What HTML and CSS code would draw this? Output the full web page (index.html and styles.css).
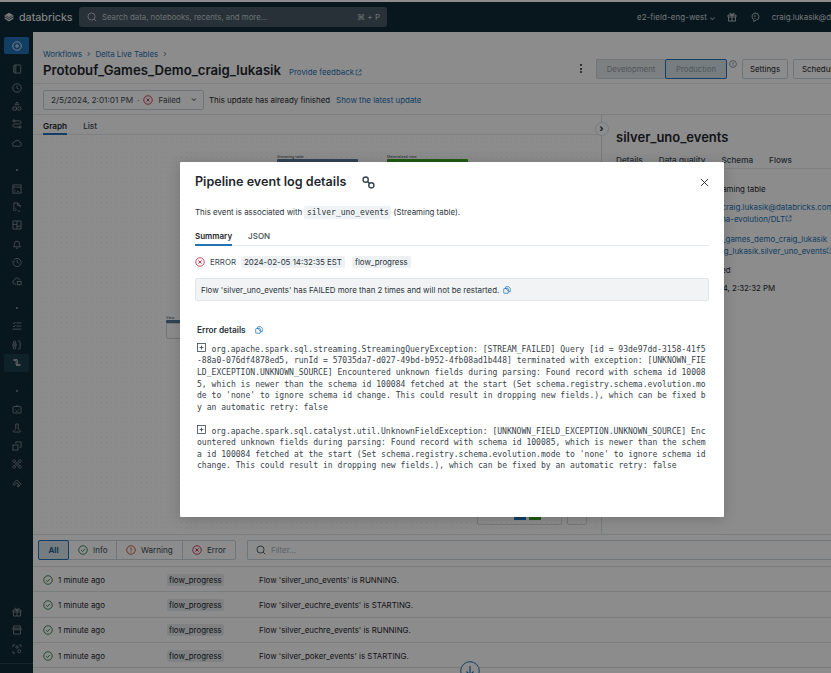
FILE: index.html
```html
<!DOCTYPE html>
<html lang="en">
<head>
<meta charset="utf-8">
<title>Pipeline event log details</title>
<link rel="stylesheet" href="styles.css">
</head>
<body>
<svg class="defs" width="0" height="0" aria-hidden="true">
  <symbol id="i-ok" viewBox="0 0 16 16"><circle cx="8" cy="8" r="6.8" fill="none" stroke="currentColor" stroke-width="1.4"/><path d="M5 8.2l2.2 2.2L11 6.2" fill="none" stroke="currentColor" stroke-width="1.4"/></symbol>
  <symbol id="i-err" viewBox="0 0 16 16"><circle cx="8" cy="8" r="6.8" fill="none" stroke="currentColor" stroke-width="1.4"/><path d="M5.5 5.5l5 5M10.5 5.5l-5 5" fill="none" stroke="currentColor" stroke-width="1.5"/></symbol>
  <symbol id="i-warn" viewBox="0 0 16 16"><circle cx="8" cy="8" r="6.8" fill="none" stroke="currentColor" stroke-width="1.4"/><path d="M8 4.2v4.8M8 10.4v1.5" fill="none" stroke="currentColor" stroke-width="1.5"/></symbol>
  <symbol id="i-search" viewBox="0 0 16 16"><circle cx="7.2" cy="7.2" r="5.7" fill="none" stroke="currentColor" stroke-width="1.4"/><path d="M11.4 11.4l3.4 3.4" stroke="currentColor" stroke-width="1.4"/></symbol>
  <symbol id="i-ext" viewBox="0 0 16 16"><path d="M7 2.5H2.5v11h11V9M9.5 2h4.5v4.500M14 2L8 8" fill="none" stroke="currentColor" stroke-width="1.5"/></symbol>
  <symbol id="i-copy" viewBox="0 0 16 16"><rect x="1.500" y="5" width="9" height="9.500" rx="1" fill="none" stroke="currentColor" stroke-width="1.500"/><path d="M5.500 5V1.500h6l3 3v7h-4M5.500 5l5 5" fill="none" stroke="currentColor" stroke-width="1.500"/></symbol>
  <symbol id="i-link" viewBox="0 0 16 16"><circle cx="4.500" cy="4.500" r="3.200" fill="none" stroke="currentColor" stroke-width="1.700"/><circle cx="11.500" cy="11.500" r="3.200" fill="none" stroke="currentColor" stroke-width="1.700"/><path d="M6.500 6.500l3 3" stroke="currentColor" stroke-width="1.700"/></symbol>
  <symbol id="i-plusbox" viewBox="0 0 16 16"><rect x="1" y="1" width="14" height="14" fill="none" stroke="currentColor" stroke-width="1.400"/><path d="M8 4.500v7M4.500 8h7" stroke="currentColor" stroke-width="1.500"/></symbol>
  <symbol id="i-plus" viewBox="0 0 16 16"><circle cx="8" cy="8" r="6.800" fill="none" stroke="currentColor" stroke-width="1.300"/><path d="M8 4.800v6.400M4.800 8h6.400" stroke="currentColor" stroke-width="1.300"/></symbol>
  <symbol id="i-book" viewBox="0 0 16 16"><rect x="3" y="1.500" width="11" height="13" rx="1" fill="none" stroke="currentColor" stroke-width="1.300"/><path d="M6 1.500v13M1.500 4.500H4M1.500 8H4M1.500 11.500H4" stroke="currentColor" stroke-width="1.300"/></symbol>
  <symbol id="i-clock" viewBox="0 0 16 16"><circle cx="8" cy="8" r="6.800" fill="none" stroke="currentColor" stroke-width="1.300"/><path d="M8 4v4.300l3 1.500" fill="none" stroke="currentColor" stroke-width="1.300"/></symbol>
  <symbol id="i-shapes" viewBox="0 0 16 16"><path d="M8 1.500l3 4.500H5zM1.500 9.500h5.500v5H1.500z" fill="none" stroke="currentColor" stroke-width="1.300"/><circle cx="11.700" cy="12" r="2.700" fill="none" stroke="currentColor" stroke-width="1.300"/></symbol>
  <symbol id="i-flow" viewBox="0 0 16 16"><path d="M3 3h9a2.500 2.500 0 0 1 0 5H4a2.500 2.500 0 0 0 0 5h9" fill="none" stroke="currentColor" stroke-width="1.300"/><circle cx="3" cy="3" r="1.700" fill="none" stroke="currentColor" stroke-width="1.300"/><circle cx="13" cy="13" r="1.700" fill="none" stroke="currentColor" stroke-width="1.300"/></symbol>
  <symbol id="i-cloud" viewBox="0 0 16 16"><path d="M4 13.200a3.200 3.200 0 0 1-.4-6.400A4.600 4.600 0 0 1 12.400 6.700 3.300 3.300 0 0 1 12 13.200z" fill="none" stroke="currentColor" stroke-width="1.300"/></symbol>
  <symbol id="i-term" viewBox="0 0 16 16"><rect x="1.500" y="1.500" width="13" height="13" fill="none" stroke="currentColor" stroke-width="1.300"/><path d="M1.500 5h13M4 9l1.500 1.500L4 12M8 12h3" fill="none" stroke="currentColor" stroke-width="1.200"/></symbol>
  <symbol id="i-file" viewBox="0 0 16 16"><path d="M3 14.500v-13h6l4 4v3M9 1.500v4h4M5 10l2 2-2 2.500M9 14.500h4" fill="none" stroke="currentColor" stroke-width="1.300"/></symbol>
  <symbol id="i-dash" viewBox="0 0 16 16"><path d="M1.500 1.500h13v13h-13zM8 1.500v13M1.500 7h6.500M8 10h6.500" fill="none" stroke="currentColor" stroke-width="1.300"/></symbol>
  <symbol id="i-bell" viewBox="0 0 16 16"><path d="M2.500 12.500c1.200-1 1.500-2.500 1.500-5a4 4 0 0 1 8 0c0 2.500.3 4 1.500 5zM6.500 14.700h3" fill="none" stroke="currentColor" stroke-width="1.300"/></symbol>
  <symbol id="i-hist" viewBox="0 0 16 16"><path d="M2.700 5A6.500 6.500 0 1 1 1.500 8.500M.8 6.500l1.700 1.700 1.700-1.700M8.300 4.500V8.500l2.500 1.500" fill="none" stroke="currentColor" stroke-width="1.300"/></symbol>
  <symbol id="i-cloudbox" viewBox="0 0 16 16"><path d="M6 13H4.200a3.200 3.200 0 0 1-.5-6.300A4.500 4.500 0 0 1 12.300 6" fill="none" stroke="currentColor" stroke-width="1.300"/><rect x="8.500" y="8.500" width="6" height="5.500" fill="none" stroke="currentColor" stroke-width="1.300"/></symbol>
  <symbol id="i-list" viewBox="0 0 16 16"><path d="M7 3h8M7 8h8M1 13h14M1.500 3l1.500 1.500L5.500 1.500M1.500 8l1.500 1.500L5.500 6.500" fill="none" stroke="currentColor" stroke-width="1.300"/></symbol>
  <symbol id="i-diff" viewBox="0 0 16 16"><circle cx="4" cy="3.500" r="2" fill="none" stroke="currentColor" stroke-width="1.300"/><circle cx="4" cy="12.500" r="2" fill="none" stroke="currentColor" stroke-width="1.300"/><rect x="1.500" y="6.500" width="5" height="3" fill="none" stroke="currentColor" stroke-width="1.300"/><path d="M9.500 1.500h2l1.500 1v11l-1.500 1h-2" fill="none" stroke="currentColor" stroke-width="1.300"/></symbol>
  <symbol id="i-pipe" viewBox="0 0 16 16"><path d="M2.500 3h3.700c1 0 1.300.6 1.300 1.500v5c0 1 .5 1.500 1.300 1.500h4.700" fill="none" stroke="currentColor" stroke-width="3"/><path d="M2.500 3h3.700c1 0 1.300.6 1.300 1.500v5c0 1 .5 1.500 1.300 1.500h4.700" fill="none" stroke="#1d3d4c" stroke-width="1.200"/></symbol>
  <symbol id="i-bot" viewBox="0 0 16 16"><rect x="1.500" y="4" width="13" height="10.500" rx="1.500" fill="none" stroke="currentColor" stroke-width="1.300"/><path d="M8 4V1.500M5 8v1M11 8v1M6 11.500h4" fill="none" stroke="currentColor" stroke-width="1.300"/></symbol>
  <symbol id="i-flask" viewBox="0 0 16 16"><path d="M6 1.500h4v7.500M6 1.500v7.500c-.5 2-2.500 2.500-3.500 3.500-.7.800-.3 2 1 2h9c1.300 0 1.700-1.200 1-2-1-1-3-1.500-3.500-3.500" fill="none" stroke="currentColor" stroke-width="1.300"/></symbol>
  <symbol id="i-boxes" viewBox="0 0 16 16"><rect x="1.500" y="6.500" width="8" height="8" fill="none" stroke="currentColor" stroke-width="1.300"/><path d="M6 4V1.500h8.500V10H12" fill="none" stroke="currentColor" stroke-width="1.300"/></symbol>
  <symbol id="i-graph" viewBox="0 0 16 16"><circle cx="3.500" cy="3.500" r="2.200" fill="none" stroke="currentColor" stroke-width="1.200"/><circle cx="12.500" cy="3.500" r="2.200" fill="none" stroke="currentColor" stroke-width="1.200"/><circle cx="8" cy="8" r="2.200" fill="none" stroke="currentColor" stroke-width="1.200"/><circle cx="3.500" cy="12.500" r="2.200" fill="none" stroke="currentColor" stroke-width="1.200"/><circle cx="12.500" cy="12.500" r="2.200" fill="none" stroke="currentColor" stroke-width="1.200"/></symbol>
  <symbol id="i-serve" viewBox="0 0 16 16"><path d="M1.500 10l6-7 7 7-2 2-5-4.500-4 4.500z" fill="none" stroke="currentColor" stroke-width="1.300"/><circle cx="10" cy="12.500" r="1.500" fill="none" stroke="currentColor" stroke-width="1.300"/></symbol>
  <symbol id="i-gift" viewBox="0 0 16 16"><path d="M1.500 5h13v3h-13zM2.500 8v6.500h11V8M8 5v9.500M8 5C6 5 4.500 4 4.500 2.800S6.500 1 8 5c1.500-4 3.500-3.400 3.500-2.200S10 5 8 5z" fill="none" stroke="currentColor" stroke-width="1.300"/></symbol>
  <symbol id="i-store" viewBox="0 0 16 16"><path d="M3 1.500h10l1.500 4.500v1.500h-13V6zM2.500 7.500v7h11v-7M1.500 5h13" fill="none" stroke="currentColor" stroke-width="1.300"/></symbol>
  <symbol id="i-scan" viewBox="0 0 16 16"><path d="M1.500 5V1.500H5M11 1.500h3.500V5M1.500 11v3.500H5" fill="none" stroke="currentColor" stroke-width="1.300"/><circle cx="8" cy="5" r="1.800" fill="none" stroke="currentColor" stroke-width="1.300"/><circle cx="11.500" cy="11.500" r="2.500" fill="none" stroke="currentColor" stroke-width="1.300"/></symbol>
  <symbol id="i-chat" viewBox="0 0 16 16"><path d="M8 1.500a6.500 6 0 0 1 1 11.900L6 15v-2.800A6.500 6 0 0 1 8 1.500z" fill="none" stroke="currentColor" stroke-width="1.300"/><path d="M8 4.500v4M8 9.800v1.300" stroke="currentColor" stroke-width="1.300"/></symbol>
  <symbol id="i-logo" viewBox="0 0 16 16"><path d="M8 1L1 5v2.200l7 4 7-4V5zM1 8.500v2.300l7 4.200 7-4.200V8.500l-7 4z" fill="currentColor"/><path d="M2.500 5.700L8 9l5.500-3.300" fill="none" stroke="#0f2a37" stroke-width=".9"/></symbol>
</svg>

<div class="app">
  <header class="topbar">
    <div class="brand"><svg class="ic-logo"><use href="#i-logo"/></svg><span>databricks</span></div>
    <div class="search">
      <svg class="ic-search"><use href="#i-search"/></svg>
      <span class="search-text">Search data, notebooks, recents, and more...</span>
      <span class="search-key">⌘ + P</span>
    </div>
    <div class="top-right">
      <span class="workspace">e2-field-eng-west ⌄</span>
      <span class="gift"><svg class="ic-top"><use href="#i-gift"/></svg><i class="gift-dot"></i></span>
      <svg class="ic-top"><use href="#i-chat"/></svg>
      <span class="user">craig.lukasik@d</span>
    </div>
  </header>

  <div class="body-row">
    <nav class="sidebar">
      <div class="nav-new"><svg class="ic-nav"><use href="#i-plus"/></svg></div>
      <div class="nav-group first">
        <span class="nav-item"><svg class="ic-nav"><use href="#i-book"/></svg></span>
        <span class="nav-item"><svg class="ic-nav"><use href="#i-clock"/></svg></span>
        <span class="nav-item"><svg class="ic-nav"><use href="#i-shapes"/></svg></span>
        <span class="nav-item"><svg class="ic-nav"><use href="#i-flow"/></svg></span>
        <span class="nav-item"><svg class="ic-nav"><use href="#i-cloud"/></svg></span>
      </div>
      <i class="nav-dot"></i>
      <div class="nav-group">
        <span class="nav-item"><svg class="ic-nav"><use href="#i-term"/></svg></span>
        <span class="nav-item"><svg class="ic-nav"><use href="#i-file"/></svg></span>
        <span class="nav-item"><svg class="ic-nav"><use href="#i-dash"/></svg></span>
        <span class="nav-item"><svg class="ic-nav"><use href="#i-bell"/></svg></span>
        <span class="nav-item"><svg class="ic-nav"><use href="#i-hist"/></svg></span>
        <span class="nav-item"><svg class="ic-nav"><use href="#i-cloudbox"/></svg></span>
      </div>
      <i class="nav-dot"></i>
      <div class="nav-group">
        <span class="nav-item"><svg class="ic-nav"><use href="#i-list"/></svg></span>
        <span class="nav-item"><svg class="ic-nav"><use href="#i-diff"/></svg></span>
        <span class="nav-item active"><svg class="ic-nav"><use href="#i-pipe"/></svg></span>
      </div>
      <i class="nav-dot"></i>
      <div class="nav-group">
        <span class="nav-item"><svg class="ic-nav"><use href="#i-bot"/></svg></span>
        <span class="nav-item"><svg class="ic-nav"><use href="#i-flask"/></svg></span>
        <span class="nav-item"><svg class="ic-nav"><use href="#i-boxes"/></svg></span>
        <span class="nav-item"><svg class="ic-nav"><use href="#i-graph"/></svg></span>
        <span class="nav-item"><svg class="ic-nav"><use href="#i-serve"/></svg></span>
      </div>
      <div class="nav-group bottom">
        <span class="nav-item"><svg class="ic-nav"><use href="#i-gift"/></svg></span>
        <span class="nav-item"><svg class="ic-nav"><use href="#i-store"/></svg></span>
        <span class="nav-item"><svg class="ic-nav"><use href="#i-scan"/></svg></span>
      </div>
    </nav>

    <main class="main">
      <section class="page-head">
        <div class="head-left">
          <div class="crumbs"><a>Workflows</a><span class="sep">›</span><a>Delta Live Tables</a><span class="sep">›</span></div>
          <div class="title-row"><h1>Protobuf_Games_Demo_craig_lukasik</h1><a class="feedback">Provide feedback<svg class="ic-ext"><use href="#i-ext"/></svg></a></div>
        </div>
        <div class="head-right">
          <span class="kebab"><i></i><i></i><i></i></span>
          <div class="mode"><span class="mode-dev">Development</span><span class="mode-prod">Production</span></div>
          <svg class="ic-info"><use href="#i-warn"/></svg>
          <button class="btn">Settings</button>
          <button class="btn btn-sched">Schedul</button>
        </div>
      </section>

      <section class="update-row">
        <div class="update-select">
          <span class="date">2/5/2024, 2:01:01 PM</span><span class="mid">·</span>
          <svg class="ic-status red"><use href="#i-err"/></svg><span>Failed</span><span class="chev">⌄</span>
        </div>
        <span class="update-msg">This update has already finished</span>
        <a class="update-link">Show the latest update</a>
      </section>

      <section class="workspace-row">
        <div class="graph-pane">
          <div class="tabs"><span class="tab on">Graph</span><span class="tab">List</span></div>
          <div class="canvas">
            <div class="node node-a"><small>Streaming table</small><b></b></div>
            <div class="node node-b"><small>Materialized view</small><b></b></div>
            <div class="node node-c"><small>View</small><b></b><span class="node-body"></span></div>
            <div class="zoombar"><span class="zb-main"><i class="zb-blue"></i><i class="zb-green"></i></span><span class="zb-side"></span></div>
          </div>
          <span class="collapse">›</span>
        </div>
        <aside class="detail">
          <h2>silver_uno_events</h2>
          <div class="detail-tabs"><span class="on">Details</span><span>Data quality</span><span>Schema</span><span>Flows</span></div>
          <div class="detail-list">
            <div class="dl-row"><span class="dk">Type</span><div class="dv"><span class="line p17">Streaming table</span></div></div>
            <div class="dl-row gap6"><span class="dk">Source</span><div class="dv"><a class="line p7">Users/craig.lukasik@databricks.com</a><a class="line p11">schema-evolution/DLT<svg class="ic-ext"><use href="#i-ext"/></svg></a></div></div>
            <div class="dl-row gap8"><span class="dk">Target</span><div class="dv"><a class="line">protobuf_games_demo_craig_lukasik</a><a class="line p20">craig_lukasik.silver_uno_events<svg class="ic-ext"><use href="#i-ext"/></svg></a></div></div>
            <div class="dl-row gap7"><span class="dk">Status</span><div class="dv"><span class="line">Completed</span></div></div>
            <div class="dl-row gap6"><span class="dk">Updated</span><div class="dv"><span class="line p3">2/5/2024, 2:32:32 PM</span></div></div>
          </div>
        </aside>
      </section>

      <section class="log">
        <div class="log-bar">
          <div class="seg">
            <span class="seg-item all">All</span>
            <span class="seg-item info"><svg class="ic-status green"><use href="#i-ok"/></svg>Info</span>
            <span class="seg-item warn"><svg class="ic-status orange"><use href="#i-warn"/></svg>Warning</span>
            <span class="seg-item err"><svg class="ic-status red"><use href="#i-err"/></svg>Error</span>
          </div>
          <div class="filter"><svg class="ic-filter"><use href="#i-search"/></svg><span>Filter...</span></div>
        </div>
        <div class="log-row"><span class="when"><svg class="ic-status green"><use href="#i-ok"/></svg>1 minute ago</span><span class="log-tag-col"><span class="tag">flow_progress</span></span><span>Flow 'silver_uno_events' is RUNNING.</span></div>
        <div class="log-row"><span class="when"><svg class="ic-status green"><use href="#i-ok"/></svg>1 minute ago</span><span class="log-tag-col"><span class="tag">flow_progress</span></span><span>Flow 'silver_euchre_events' is STARTING.</span></div>
        <div class="log-row"><span class="when"><svg class="ic-status green"><use href="#i-ok"/></svg>1 minute ago</span><span class="log-tag-col"><span class="tag">flow_progress</span></span><span>Flow 'silver_euchre_events' is RUNNING.</span></div>
        <div class="log-row"><span class="when"><svg class="ic-status green"><use href="#i-ok"/></svg>1 minute ago</span><span class="log-tag-col"><span class="tag">flow_progress</span></span><span>Flow 'silver_poker_events' is STARTING.</span></div>
        <span class="scroll-down"><svg viewBox="0 0 20 20"><circle cx="10" cy="10" r="9.300" fill="#fff" stroke="currentColor" stroke-width="1"/><path d="M10 5v9M6.500 10.500l3.500 3.500 3.500-3.500" fill="none" stroke="currentColor" stroke-width="1.200"/></svg></span>
      </section>
    </main>
  </div>

  <div class="overlay">
    <div class="modal">
      <div class="modal-head">
        <h3>Pipeline event log details</h3>
        <svg class="ic-link"><use href="#i-link"/></svg>
        <svg class="ic-close" viewBox="0 0 10 10"><path d="M1 1l8 8M9 1l-8 8" stroke="currentColor" stroke-width="1"/></svg>
      </div>
      <p class="assoc">This event is associated with <code>silver_uno_events</code> (Streaming table).</p>
      <div class="modal-tabs"><span class="on">Summary</span><span>JSON</span></div>
      <div class="event-meta">
        <svg class="ic-status red"><use href="#i-err"/></svg><span class="lvl">ERROR</span>
        <span class="chip">2024-02-05 14:32:35 EST</span><span class="chip">flow_progress</span>
      </div>
      <div class="banner">Flow 'silver_uno_events' has FAILED more than 2 times and will not be restarted.<svg class="ic-copy"><use href="#i-copy"/></svg></div>
      <div class="err-head"><strong>Error details</strong><svg class="ic-copy"><use href="#i-copy"/></svg></div>
      <p class="trace"><svg class="ic-plusbox"><use href="#i-plusbox"/></svg>org.apache.spark.sql.streaming.StreamingQueryException: [STREAM_FAILED] Query [id = 93de97dd-3158-41f5-88a0-076df4878ed5, runId = 57035da7-d027-49bd-b952-4fb08ad1b448] terminated with exception: [UNKNOWN_FIELD_EXCEPTION.UNKNOWN_SOURCE] Encountered unknown fields during parsing: Found record with schema id 100085, which is newer than the schema id 100084 fetched at the start (Set schema.registry.schema.evolution.mode to 'none' to ignore schema id change. This could result in dropping new fields.), which can be fixed by an automatic retry: false</p>
      <p class="trace"><svg class="ic-plusbox"><use href="#i-plusbox"/></svg>org.apache.spark.sql.catalyst.util.UnknownFieldException: [UNKNOWN_FIELD_EXCEPTION.UNKNOWN_SOURCE] Encountered unknown fields during parsing: Found record with schema id 100085, which is newer than the schema id 100084 fetched at the start (Set schema.registry.schema.evolution.mode to 'none' to ignore schema id change. This could result in dropping new fields.), which can be fixed by an automatic retry: false</p>
    </div>
  </div>
</div>
</body>
</html>
```
FILE: styles.css
```css
* { box-sizing: border-box; }
html, body { margin: 0; height: 100%; overflow: hidden; }
body { font-family: Inter, "Liberation Sans", sans-serif; font-size: 7.900px; color: #1f272d; background: #fff; }
.defs { position: absolute; }
a { color: #2272b4; }
svg { display: block; flex: none; }

.app { position: relative; width: 831px; height: 673px; overflow: hidden; padding-top: 2px; display: flex; flex-direction: column; }

/* top bar */
.topbar { height: 30px; background: #0f2a37; color: #fff; display: flex; align-items: center; flex: none; }
.brand { width: 79px; padding-left: 4px; display: flex; align-items: center; gap: 5px; font-size: 10.800px; color: #fff; flex: none; }
.ic-logo { width: 10px; height: 10px; color: #d9dde0; }
.search { width: 308px; height: 20px; background: #475a65; border-radius: 3px; display: flex; align-items: center; padding: 0 7px 0 8px; gap: 5px; color: #c6cdd2; font-size: 7.800px; }
.ic-search { width: 10px; height: 10px; }
.search-text { flex: 1; }
.search-key { font-size: 8px; }
.top-right { margin-left: auto; display: flex; align-items: center; width: 194px; flex: none; font-size: 7.900px; color: #d5dbdf; white-space: nowrap; overflow: hidden; }
.workspace { width: 91px; letter-spacing: .1px; }
.gift { position: relative; width: 23px; }
.gift-dot { position: absolute; left: 11px; top: -3px; width: 3px; height: 3px; border-radius: 50%; background: #ff3621; }
.ic-top { width: 10px; height: 10px; }
.user { margin-left: 12px; }

.body-row { flex: 1; display: flex; min-height: 0; }

/* sidebar */
.sidebar { width: 33px; flex: none; background: #0f2a37; color: #8a979f; display: flex; flex-direction: column; align-items: center; padding-top: 5px; }
.nav-new { width: 25px; height: 17px; background: #2272b4; color: #fff; border-radius: 2px; display: grid; place-items: center; }
.nav-group { display: flex; flex-direction: column; align-items: center; width: 100%; }
.nav-group.first { margin-top: 6px; }
.nav-group.bottom { margin-top: auto; margin-bottom: 9px; padding-bottom: 5px; border-bottom: 1px solid #2d4a58; }
.nav-item { width: 25px; height: 18.400px; display: grid; place-items: center; border-radius: 2px; }
.nav-item.active { background: #1d3d4c; color: #fff; }
.ic-nav { width: 10px; height: 10px; }
.nav-dot { width: 2px; height: 2px; border-radius: 50%; background: #8a979f; margin: 17.500px 0 8px; flex: none; }

/* main */
.main { flex: 1; min-width: 0; display: flex; flex-direction: column; }
.page-head { height: 52px; padding: 0 0 0 10px; display: flex; justify-content: space-between; border-bottom: 1px solid #e8ecef; flex: none; }
.head-left { padding-top: 15px; }
.crumbs { display: flex; align-items: center; gap: 5px; font-size: 7.800px; height: 12px; margin-top: 1px; }
.sep { color: #5f7281; font-size: 8.500px; }
.title-row { display: flex; align-items: baseline; gap: 8px; white-space: nowrap; }
h1 { margin: 0; font-size: 13.150px; font-weight: 600; line-height: 20px; }
.feedback { font-size: 7.850px; display: inline-flex; align-items: center; gap: 1px; }
.ic-ext { width: 7px; height: 7px; display: inline-block; vertical-align: 0; }
.head-right { display: flex; align-items: center; width: 251px; flex: none; padding-top: 22px; white-space: nowrap; overflow: hidden; }
.kebab { width: 16px; display: flex; flex-direction: column; align-items: flex-start; gap: 1.500px; flex: none; }
.kebab i { width: 2px; height: 2px; background: #1f272d; border-radius: 50%; }
.mode { display: flex; height: 20px; background: #e4e9ec; border-radius: 2px; font-size: 7.800px; color: #929ea7; flex: none; }
.mode-dev { width: 69px; display: grid; place-items: center; border: 1px solid #cbd5dc; border-right: 0; border-radius: 2px 0 0 2px; }
.mode-prod { width: 62px; display: grid; place-items: center; border: 1px solid #2272b4; border-radius: 2px; background: #d8e3ea; }
.ic-info { width: 8px; height: 8px; margin: -10px 5px 0 2px; color: #5f7281; }
.btn { height: 20px; padding: 0; font: inherit; font-size: 7.900px; background: #fff; border: 1px solid #cbd5dc; border-radius: 2px; color: #1f272d; width: 46px; flex: none; }
.btn-sched { margin-left: 5px; width: 60px; text-align: left; padding-left: 8px; }

.update-row { height: 31px; padding: 1px 0 0 10px; display: flex; align-items: center; border-bottom: 1px solid #e0e4e7; flex: none; white-space: nowrap; }
.update-select { width: 161px; height: 20px; border: 1px solid #cbd5dc; border-radius: 2px; display: flex; align-items: center; padding-left: 7px; gap: 5px; color: #3e4a52; }
.date { font-size: 8.200px; }
.mid { margin: 0 -1px; }
.chev { margin-left: auto; margin-right: 6px; margin-top: -3px; font-size: 8px; }
.ic-status { width: 10px; height: 10px; flex: none; }
.red { color: #c82d4c; }
.green { color: #277c43; }
.orange { color: #be501e; }
.update-msg { margin-left: 5px; }
.update-link { margin-left: 6px; }

.workspace-row { flex: 1; min-height: 0; display: flex; border-bottom: 1px solid #dfe3e6; }
.graph-pane { position: relative; width: 569px; border-right: 1px solid #dde2e5; display: flex; flex-direction: column; flex: none; }
.tabs { height: 20px; display: flex; gap: 16px; padding-left: 10px; border-bottom: 1px solid #e6e9ec; font-size: 8.200px; font-weight: 500; align-items: center; flex: none; color: #3e4a52; }
.tab { height: 20px; line-height: 22px; }
.tab.on { font-weight: 600; color: #1f272d; border-bottom: 2px solid #2272b4; }
.canvas { position: relative; flex: 1; background-image: radial-gradient(#f0f2f3 .6px, transparent .7px); background-size: 5px 5px; margin-left: 1px; }
.node { position: absolute; width: 81px; color: #3e4a52; }
.node small { display: block; font-size: 3.600px; line-height: 4px; }
.node b { display: block; height: 3px; border-radius: 1px 1px 0 0; background: #5c7a9f; }
.node-a { left: 243px; top: 20px; }
.node-b { left: 353px; top: 20px; }
.node-b b { background: #3ba526; }
.node-c { left: 132px; top: 181px; width: 20px; }
.node-body { display: block; height: 16px; border: 1px solid #cfd5da; border-radius: 0 0 2px 2px; }
.zoombar { position: absolute; left: 443px; bottom: 9px; display: flex; gap: 5px; height: 10px; }
.zb-main { width: 85px; border: 1px solid #d7dbde; border-radius: 2px; position: relative; }
.zb-blue, .zb-green { position: absolute; top: 0; width: 12px; height: 4px; }
.zb-blue { left: 36px; background: #2272b4; }
.zb-green { left: 51px; background: #3ba526; }
.zb-side { width: 20px; border: 1px solid #d7dbde; border-radius: 2px; }
.collapse { position: absolute; right: -7.500px; top: 7px; width: 14px; height: 14px; border: 1px solid #dde2e5; border-radius: 50%; background: #fff; display: grid; place-items: center; font-weight: 700; font-size: 10px; line-height: 1; padding-bottom: 2px; }
.detail { flex: 1; min-width: 0; padding: 12px 0 0 14px; overflow: hidden; white-space: nowrap; }
h2 { margin: 0; font-size: 13px; font-weight: 600; line-height: 20px; }
.detail-tabs { display: flex; gap: 16px; height: 22px; padding-top: 4px; align-items: center; font-size: 8.200px; font-weight: 500; border-bottom: 1px solid #e6e9ec; color: #3e4a52; }
.detail-list { margin-top: 14px; font-size: 7.900px; line-height: 12px; }
.dl-row { display: flex; }
.dk { width: 74px; flex: none; }
.line { display: block; }
.p3 { padding-left: 3px; }
.p7 { padding-left: 7px; }
.p11 { padding-left: 11px; }
.p17 { padding-left: 17px; }
.p20 { padding-left: 20px; }
.gap6 { margin-top: 6px; }
.gap7 { margin-top: 7px; }
.gap8 { margin-top: 8px; }

.log { position: relative; height: 138px; flex: none; }
.log-bar { height: 32px; padding: 5px 0 7px 5px; display: flex; gap: 11px; border-bottom: 1px solid #dfe3e6; }
.seg { display: flex; height: 20px; border: 1px solid #cbd5dc; border-radius: 2px; font-size: 8.100px; }
.seg-item { display: flex; align-items: center; gap: 5px; padding-left: 9px; border-right: 1px solid #cbd5dc; color: #3e4a52; }
.seg-item.info { width: 48px; }
.seg-item.warn { width: 66px; }
.seg-item.err { width: 52px; border-right: 0; }
.seg-item.all { width: 31px; justify-content: center; padding: 0; margin: -1px 0 -1px -1px; background: #d8e3ea; border: 1px solid #2272b4; border-radius: 2px; color: #0e538b; font-weight: 600; }
.filter { flex: 1; height: 20px; border: 1px solid #cbd5dc; border-right: 0; border-radius: 2px 0 0 2px; display: flex; align-items: center; padding-left: 8px; gap: 5px; color: #a9b3bb; }
.ic-filter { width: 10px; height: 10px; color: #3e4a52; }
.log-row { height: 25.300px; display: flex; align-items: center; padding: 1px 0 0 10px; border-bottom: 1px solid #dfe3e6; }
.when { width: 124px; display: flex; align-items: center; gap: 5px; flex: none; }
.log-tag-col { width: 92px; flex: none; }
.tag { display: inline-block; background: #e8ecef; border-radius: 2px; padding: 1px 2px; line-height: 10px; }
.scroll-down { position: absolute; left: 427px; top: 126px; width: 20px; height: 20px; color: #2272b4; }
.scroll-down svg { width: 20px; height: 20px; }

/* dim layer + modal */
.overlay { position: absolute; inset: 0; background: rgba(0, 0, 0, .45); padding: 162px 0 0 180px; }
.modal { width: 544px; height: 355px; background: #fff; padding: 0 15px; border-radius: 1px; box-shadow: 0 2px 14px rgba(0, 0, 0, .18); }
.modal-head { height: 40px; display: flex; align-items: center; gap: 16px; }
h3 { margin: 0; font-size: 12.600px; font-weight: 600; line-height: 16px; }
.ic-link { width: 13px; height: 13px; color: #36454f; }
.ic-close { width: 9px; height: 9px; margin-left: auto; margin-right: .500px; color: #1f272d; }
.assoc { margin: 3px 0 0; height: 14px; line-height: 14px; font-size: 7.900px; color: #2a343b; }
code { font-family: "DejaVu Sans Mono", monospace; font-size: 8px; background: #f0f3f5; padding: 2px 2.500px; border-radius: 2px; }
.modal-tabs { display: flex; gap: 16px; margin-top: 9px; height: 18px; border-bottom: 1px solid #e4ecf2; font-size: 8px; color: #3e4a52; font-weight: 500; align-items: center; }
.modal-tabs span { height: 18px; line-height: 17px; }
.modal-tabs .on { color: #1f272d; font-weight: 600; border-bottom: 2px solid #2272b4; }
.event-meta { display: flex; align-items: center; margin-top: 9px; height: 14px; color: #3e4a52; }
.lvl { margin-left: 5px; }
.chip { background: #eef1f3; padding: 0 3px; line-height: 12px; border-radius: 2px; margin-left: 5px; color: #2a343b; }
.chip + .chip { margin-left: 7px; }
.banner { margin-top: 9px; height: 23px; background: #f1f3f4; border: 1px solid #e2e6e9; border-radius: 2px; padding: 0 5px; display: flex; align-items: center; gap: 4px; color: #2a343b; }
.ic-copy { width: 8px; height: 8px; color: #2272b4; }
.err-head { display: flex; align-items: center; gap: 9px; margin: 22.500px 0 0 2px; height: 12px; }
.err-head strong { font-weight: 600; font-size: 8.300px; color: #2a343b; }
.trace { width: 510px; margin: 7.500px 0 0 2px; font-family: "DejaVu Sans Mono", monospace; font-size: 8.050px; line-height: 11.700px; word-break: break-all; color: #36424a; }
.trace + .trace { margin-top: 11px; }
.ic-plusbox { display: inline-block; width: 9px; height: 9px; margin-right: 5.400px; vertical-align: -.5px; color: #36454f; }
```
